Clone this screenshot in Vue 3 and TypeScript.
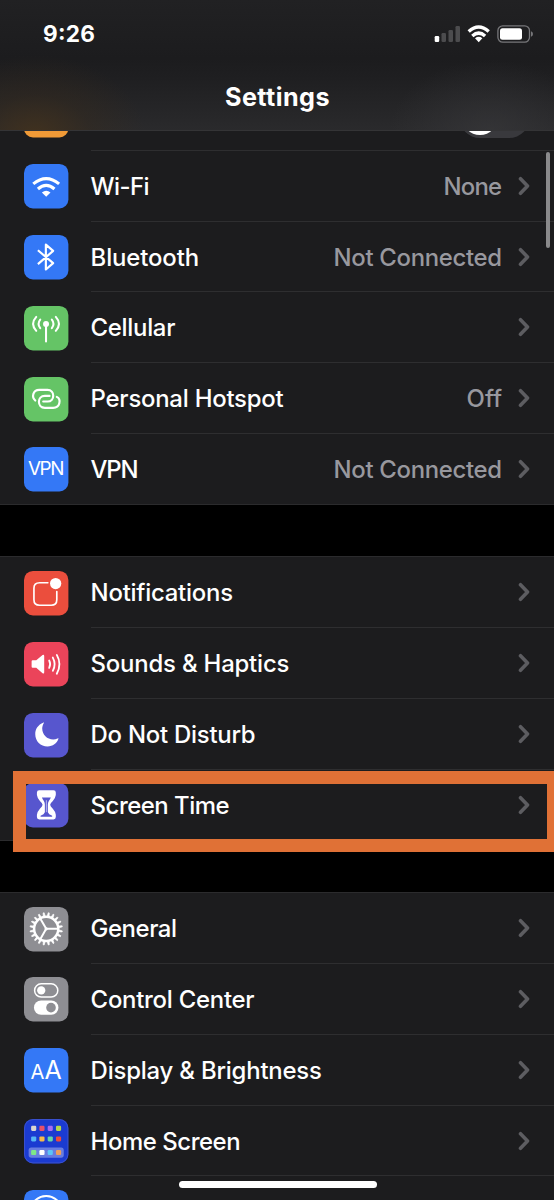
<script setup lang="ts">
interface Row {
  icon: string
  color: string
  label: string
  width: number
  value?: string
  valueWidth?: number
  toggle?: boolean
}

const groups: Row[][] = [
  [
    { icon: 'blank', color: '#f09a37', label: '', width: 0, toggle: true },
    { icon: 'wifi', color: '#3478f6', label: 'Wi-Fi', width: 59, value: 'None', valueWidth: 58.5 },
    { icon: 'bluetooth', color: '#3478f6', label: 'Bluetooth', width: 108.5, value: 'Not Connected', valueWidth: 168.5 },
    { icon: 'cellular', color: '#65c466', label: 'Cellular', width: 84.8 },
    { icon: 'hotspot', color: '#65c466', label: 'Personal Hotspot', width: 193, value: 'Off', valueWidth: 35.5 },
    { icon: 'vpn', color: '#3478f6', label: 'VPN', width: 48, value: 'Not Connected', valueWidth: 168.5 },
  ],
  [
    { icon: 'notifications', color: '#eb4e3d', label: 'Notifications', width: 142.4 },
    { icon: 'sounds', color: '#eb445a', label: 'Sounds & Haptics', width: 198.8 },
    { icon: 'moon', color: '#5756ce', label: 'Do Not Disturb', width: 165 },
    { icon: 'hourglass', color: '#5756ce', label: 'Screen Time', width: 139 },
  ],
  [
    { icon: 'gear', color: '#8e8e93', label: 'General', width: 86.4 },
    { icon: 'control', color: '#8e8e93', label: 'Control Center', width: 164 },
    { icon: 'display', color: '#3478f6', label: 'Display & Brightness', width: 231.3 },
    { icon: 'home', color: '#1b3bd1', label: 'Home Screen', width: 150 },
    { icon: 'accessibility', color: '#3478f6', label: '', width: 0 },
  ],
]

const teeth = Array.from({ length: 20 }, (_, i) => i * 18)
const apps: [number, number, string][] = [
  [29, 28, '#d9d6d0'], [54, 28, '#e8506a'], [79, 28, '#a66cf0'], [104, 28, '#b4d84c'],
  [29, 60, '#56b6f5'], [54, 60, '#f6b94a'], [79, 60, '#63d6a6'], [104, 60, '#ee4b3a'],
  [29, 101, '#7ee787'], [54, 101, '#ffffff'], [79, 101, '#5cc5f8'], [104, 101, '#ee9f5c'],
]
</script>

<template>
  <div class="phone">
    <main class="list">
      <section v-for="(group, g) in groups" :key="g" class="group">
        <div v-for="(row, r) in group" :key="r" class="row">
          <svg class="icon" viewBox="0 0 134 134">
            <rect width="134" height="134" rx="27" :fill="row.color" />
            <g v-if="row.icon === 'wifi'" fill="none" stroke="#fff" stroke-width="9.5">
              <path d="M28 60 Q67 28 106 60" />
              <path d="M42 75.500 Q67 54 92 75.500" />
              <path d="M54 86 Q67 76 80 86 L67 99 Z" fill="#fff" stroke="none" />
            </g>
            <path v-else-if="row.icon === 'bluetooth'" d="M42 46 L88 85 L66 104 V29 L88 48 L42 88" fill="none" stroke="#fff" stroke-width="6.5" stroke-linejoin="round" />
            <g v-else-if="row.icon === 'cellular'" fill="none" stroke="#fff" stroke-width="6.2" stroke-linecap="round">
              <circle cx="66.5" cy="54" r="9" fill="#fff" stroke="none" />
              <path d="M66.5 56 V107 M37 33 Q18 54 37 75 M49 41 Q39 54 49 67 M96 33 Q115 54 96 75 M84 41 Q94 54 84 67" />
            </g>
            <g v-else-if="row.icon === 'hotspot'" fill="none" stroke="#fff" stroke-width="6.5" stroke-linecap="round">
              <path d="M34 71 C22 60 27 39 46 39 H71 C94 39 94 74 71 74 H58" />
              <path d="M77 57 H63 C39 57 39 93 63 93 H88 C109 93 113 67 99 60" />
            </g>
            <text v-else-if="row.icon === 'vpn'" x="12" y="86" font-size="57" textLength="110" class="glyph">VPN</text>
            <g v-else-if="row.icon === 'notifications'" fill="none" stroke="#fff" stroke-width="5">
              <path d="M72 35.500 H47 Q30 35.500 30 52 V87 Q30 103.500 47 103.500 H82 Q99 103.500 99 87 V62" stroke-linecap="round" />
              <circle cx="95.500" cy="38" r="17" fill="#fff" stroke="none" />
            </g>
            <g v-else-if="row.icon === 'sounds'" fill="none" stroke="#fff" stroke-width="5.5" stroke-linecap="round">
              <path d="M26 55 H37 L56 39 Q61 37 61 42 V91 Q61 97 56 94 L37 78 H26 Q23 78 23 75 V58 Q23 55 26 55 Z" fill="#fff" stroke="none" />
              <path d="M76 56 Q82 67 76 78 M87 47 Q98 67 87 87 M99 39 Q115 67 99 96" />
            </g>
            <path v-else-if="row.icon === 'moon'" d="M60 30 Q62 28 59 29 C42 36 34 49 34 64 C34 85 50 101 71 101 C87 101 99 92 104 78 Q105 75 101 77 C97 79 93 80 88 80 C70 80 55 66 55 47 C55 41 57 35 60 30 Z" fill="#fff" />
            <g v-else-if="row.icon === 'hourglass'">
              <path d="M46 22 H89 Q96 22 96 29 V36 Q95 45 87 54 Q79 61 79 66 Q79 71 87 78 Q95 87 96 96 V103 Q96 110 89 110 H46 Q39 110 39 103 V96 Q40 87 48 78 Q56 71 56 66 Q56 61 48 54 Q40 45 39 36 V29 Q39 22 46 22 Z" fill="#fff" />
              <path d="M54 44 H81 Q79 49 75 54 Q72 59 72 66 V88 Q74 94 85 99 V102 H50 V99 Q61 94 63 88 V66 Q63 59 60 54 Q56 49 54 44 Z" :fill="row.color" />
              <path d="M67.500 52 V88" stroke="#fff" stroke-opacity=".7" stroke-width="2.500" />
            </g>
            <g v-else-if="row.icon === 'gear'" fill="none" stroke="#fff">
              <circle cx="67" cy="66" r="36.500" stroke-width="7.500" />
              <path v-for="a in teeth" :key="a" d="M64 29 L65.500 17 H68.500 L70 29 Z" fill="#fff" stroke-width="2" stroke-linejoin="round" :transform="`rotate(${a + 9} 67 66)`" />
              <path d="M67 66 H102 M67 66 L49.500 35.700 M67 66 L49.500 96.300" stroke-width="6" />
              <circle cx="67" cy="66" r="5" fill="#fff" stroke="none" />
            </g>
            <g v-else-if="row.icon === 'control'">
              <rect x="32" y="20.500" width="70" height="40" rx="20" fill="none" stroke="#fff" stroke-width="4.5" />
              <circle cx="52" cy="40.500" r="12.500" fill="#fff" />
              <rect x="30" y="71" width="74" height="43" rx="21.500" fill="#fff" />
              <circle cx="81.500" cy="92.500" r="14.500" :fill="row.color" />
            </g>
            <g v-else-if="row.icon === 'display'" class="glyph">
              <text x="20" y="94" font-size="60" textLength="42" lengthAdjust="spacingAndGlyphs">A</text>
              <text x="62" y="94" font-size="76" textLength="52" lengthAdjust="spacingAndGlyphs">A</text>
            </g>
            <g v-else-if="row.icon === 'home'">
              <rect x="1.500" y="1.500" width="131" height="131" rx="26" fill="none" stroke="#4b5ccb" stroke-width="2" />
              <rect x="14" y="86" width="106" height="31" rx="8" fill="#fff" fill-opacity=".34" />
              <rect v-for="([x, y, c], i) in apps" :key="i" :x="x - 7.5" :y="y - 7.5" width="15.500" height="15.500" rx="3.500" :fill="c" />
            </g>
            <circle v-else-if="row.icon === 'accessibility'" cx="67" cy="65" r="47" fill="none" stroke="#fff" stroke-width="6" />
          </svg>
          <div class="body">
            <svg v-if="row.label" class="label" height="40" :width="row.width + 4">
              <text x="-0.4" y="29" :textLength="row.width">{{ row.label }}</text>
            </svg>
            <svg v-if="row.value" class="value" height="40" :width="row.valueWidth">
              <text x="-0.4" y="29" :textLength="row.valueWidth">{{ row.value }}</text>
            </svg>
            <span v-if="row.toggle" class="switch"><i class="knob"></i></span>
            <svg v-else class="chevron" viewBox="0 0 12 20">
              <path d="M2.500 2.700 L9.500 10 L2.500 17.300" />
            </svg>
          </div>
        </div>
      </section>
    </main>

    <div class="highlight"></div>
    <div class="scrollbar"></div>

    <header class="header">
      <div class="status">
        <svg class="time" width="56" height="30"><text x="0" y="23.3" textLength="52">9:26</text></svg>
        <svg class="indicators" width="100" height="20" viewBox="434 24 100 20">
          <rect x="434.700" y="36" width="4.500" height="6" rx="1.200" fill="#fff" />
          <g fill="#4c4c4e">
            <rect x="441.500" y="33" width="4.500" height="9" rx="1.200" />
            <rect x="448.500" y="30" width="4.500" height="12" rx="1.200" />
            <rect x="455.500" y="26" width="4.500" height="16" rx="1.200" />
          </g>
          <g fill="none" stroke="#fff" stroke-width="3.400">
            <path d="M468.700 31.500 Q478.700 22.700 488.700 31.500" />
            <path d="M472.300 36 Q478.700 30.200 485.100 36" />
            <path d="M475 38.300 Q478.700 35.400 482.400 38.300 L478.700 42.200 Z" fill="#fff" stroke="none" />
          </g>
          <rect x="497.900" y="25.900" width="31.600" height="16.200" rx="4.800" fill="none" stroke="#77777a" stroke-width="1.300" />
          <rect x="500" y="28.200" width="22" height="11.600" rx="2.500" fill="#fff" />
          <path d="M531 31.300 Q533 32 533 34 Q533 36 531 36.700 Z" fill="#77777a" />
        </svg>
      </div>
      <svg class="title" width="110" height="40"><text x="0" y="28.4" textLength="104.500">Settings</text></svg>
    </header>
    <div class="home-bar"></div>
  </div>
</template>

<style scoped>
.phone {
  position: relative;
  width: 554px;
  height: 1200px;
  overflow: hidden;
  background: #000;
  color: #fff;
  font-family: Inter, "Liberation Sans", sans-serif;
}
.list {
  display: flex;
  flex-direction: column;
  gap: 51.1px;
  padding-top: 78.8px;
}
.group {
  box-sizing: border-box;
  background: #1c1c1e;
  border-top: 1px solid #2b2b2d;
  border-bottom: 1px solid #2b2b2d;
}
.row {
  display: flex;
  align-items: center;
  height: 70.9px;
  padding-left: 23.6px;
}
.row:last-child {
  height: 69.9px;
}
.icon {
  flex: none;
  width: 44.4px;
  height: 44.4px;
  margin-top: 0.8px;
  overflow: visible;
}
.glyph {
  fill: #fff;
  font-weight: 400;
}
.body {
  display: flex;
  flex: 1;
  align-items: center;
  box-sizing: border-box;
  height: 100%;
  margin-left: 22.6px;
  padding-right: 24px;
  border-bottom: 1px solid #2e2e30;
}
.row:last-child .body {
  border-bottom: 0;
}
.label,
.value {
  flex: none;
  overflow: visible;
  font-size: 23.9px;
  font-weight: 500;
}
.label {
  fill: #fff;
}
.value {
  margin-left: auto;
  margin-right: 16px;
  fill: #98989e;
}
.chevron {
  flex: none;
  width: 12px;
  height: 20px;
}
.label + .chevron,
.chevron:first-child {
  margin-left: auto;
}
.chevron path {
  fill: none;
  stroke: #5d5d61;
  stroke-width: 3.6;
  stroke-linecap: round;
  stroke-linejoin: round;
}
.switch {
  display: flex;
  align-items: flex-end;
  box-sizing: border-box;
  width: 71px;
  height: 47px;
  margin-left: auto;
  margin-right: 0;
  padding: 3px;
  border-radius: 21px;
  background: #39393d;
}
.knob {
  width: 36px;
  height: 36px;
  border-radius: 50%;
  background: #fff;
}
.header {
  position: absolute;
  top: 0;
  left: 0;
  display: flex;
  flex-direction: column;
  box-sizing: border-box;
  width: 554px;
  height: 131px;
  border-bottom: 1px solid #343436;
  background:
    radial-gradient(ellipse 110px 80px at 35px 135px, rgba(68, 50, 28, 0.85), rgba(56, 43, 28, 0.4) 50%, rgba(40, 36, 30, 0) 100%),
    radial-gradient(ellipse 100px 70px at 490px 130px, rgba(58, 58, 61, 0.6), rgba(58, 58, 61, 0)),
    linear-gradient(#212123 0, #1c1c1e 45%, #1f1f21 60%, #2a2a2c 100%);
}
.status {
  display: flex;
  justify-content: space-between;
  padding: 19px 20px 0 43px;
}
.time {
  overflow: visible;
  fill: #fff;
  font-size: 22.6px;
  font-weight: 700;
}
.indicators {
  margin-top: 5px;
}
.title {
  margin: 29px 0 0 224.8px;
  overflow: visible;
  fill: #fff;
  font-size: 25.2px;
  font-weight: 700;
}
.highlight {
  position: absolute;
  top: 771px;
  left: 13px;
  box-sizing: border-box;
  width: 541px;
  height: 81px;
  border: 13px solid #e07136;
  border-right-width: 7px;
}
.scrollbar {
  position: absolute;
  top: 152px;
  left: 545.5px;
  width: 4.5px;
  height: 96px;
  border-radius: 3px;
  background: #8a8a8c;
}
.home-bar {
  position: absolute;
  top: 1180.5px;
  left: 178.5px;
  width: 198.5px;
  height: 7.5px;
  border-radius: 4px;
  background: #fff;
}
</style>

<style>
body {
  background: #000;
}
</style>
